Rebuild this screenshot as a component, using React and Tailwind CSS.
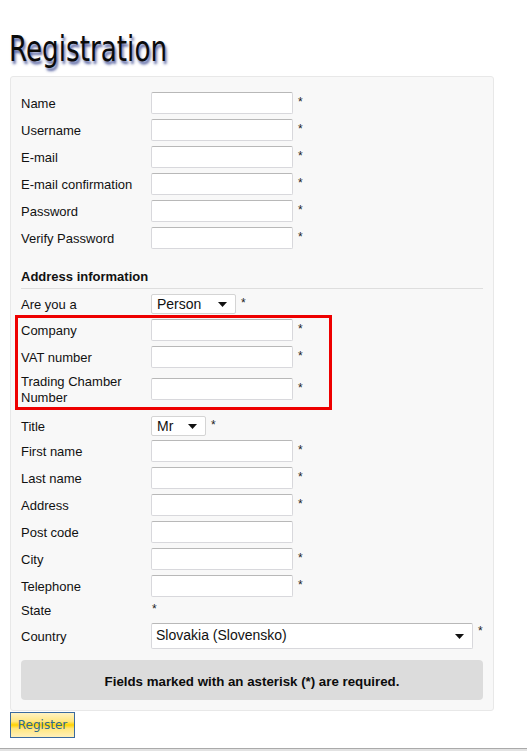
import React from "react";

// little black triangle used on the selects
const Caret = () => (
  <svg width="9" height="5" viewBox="0 0 9 5" className="shrink-0">
    <path d="M0 0h9L4.5 5z" fill="#111" />
  </svg>
);

const Star = ({ className = "" }) => (
  <span className={"text-[12px] leading-none text-[#222] " + className}>*</span>
);

const TextField = () => (
  <input
    type="text"
    className="h-[22px] w-[142px] rounded-[2px] border border-[#d8d8dc] border-t-[#b8b8b8] bg-white px-1 outline-none"
  />
);

const Label = ({ children, className = "" }) => (
  <label className={"w-[130px] shrink-0 pt-[2px] " + className}>{children}</label>
);

const Row = ({ label, required = true }) => (
  <div className="flex items-center">
    <Label>{label}</Label>
    <TextField />
    {required && <Star className="ml-[5px] -mt-[3px]" />}
  </div>
);

const Dropdown = ({ value, width }) => (
  <div
    className={
      "flex h-[20px] items-center justify-between rounded-[2px] border border-[#d4d4d4] bg-white pl-[5px] pr-[8px] " +
      width
    }
  >
    <span className="text-[14px] leading-[18px] text-[#111]">{value}</span>
    <Caret />
  </div>
);

export default function App() {
  const account = ["Name", "Username", "E-mail", "E-mail confirmation", "Password", "Verify Password"];
  const address = [
    ["Last name", true],
    ["Address", true],
    ["Post code", false],
    ["City", true],
    ["Telephone", true],
  ];

  return (
    <div className="min-h-[751px] bg-white font-['Liberation_Sans',Arial,sans-serif] text-[13px] text-[#111]">
      <div className="px-[10px]">
        <h1 className="pt-[29px] pb-[7px] font-['DejaVu_Sans_Condensed',sans-serif] text-[36px] leading-[40px] text-[#0b0b0b]">
          <span className="-ml-px inline-block origin-left scale-x-[0.81] [text-shadow:2px_3px_3px_rgba(30,45,130,0.75)]">
            Registration
          </span>
        </h1>

        <div className="w-[484px] rounded-[3px] border border-[#e8e8e8] bg-[#f8f8f8] px-[10px] pt-[15px] pb-[10px]">
          <div className="flex flex-col gap-[5px]">
            {account.map((l) => (
              <Row key={l} label={l} />
            ))}
          </div>

          {/* address section */}
          <div className="mt-[17px] border-b border-[#dedede] pt-[2px] pb-[3px] text-[13px] font-bold leading-[17px]">
            Address information
          </div>

          <div className="mt-[5px] flex h-[20px] items-center">
            <Label>Are you a</Label>
            <Dropdown value="Person" width="w-[85px]" />
            <Star className="ml-[5px] -mt-[3px]" />
          </div>

          {/* company fields, highlighted */}
          <div className="-ml-[6px] mt-[1px] flex w-[317px] flex-col gap-[5px] border-[3px] border-[#ee0000] pl-[3px] pt-[1px] pb-[2px]">
            <Row label="Company" />
            <Row label="VAT number" />
            <div className="flex h-[32px] items-center">
              <Label className="leading-[16px]">
                Trading Chamber
                <br />
                Number
              </Label>
              <TextField />
              <Star className="ml-[5px] -mt-[3px]" />
            </div>
          </div>

          <div className="mt-[6px] flex h-[20px] items-center">
            <Label>Title</Label>
            <Dropdown value="Mr" width="w-[55px]" />
            <Star className="ml-[5px] -mt-[3px]" />
          </div>

          <div className="mt-[4px] flex flex-col gap-[5px]">
            <Row label="First name" />
            {address.map(([l, req]) => (
              <Row key={l} label={l} required={req} />
            ))}
          </div>

          <div className="mt-[5px] flex h-[16px] items-center">
            <Label>State</Label>
            <Star className="ml-[1px] -mt-[3px]" />
          </div>

          <div className="mt-[5px] flex items-center">
            <Label>Country</Label>
            <div className="flex h-[26px] w-[322px] items-start justify-between rounded-[2px] border border-[#d8d8dc] border-t-[#b8b8b8] bg-white pl-[4px] pr-[8px] pt-[2px]">
              <span className="text-[14px] leading-[18px] text-[#111]">Slovakia (Slovensko)</span>
              <span className="mt-[8px]">
                <Caret />
              </span>
            </div>
            <Star className="ml-[5px] -mt-[10px]" />
          </div>

          <div className="mt-[11px] flex h-[40px] items-center justify-center rounded-[4px] bg-[#dcdcdc] pt-[4px] text-[13.3px] font-bold text-[#0c0c0c]">
            Fields marked with an asterisk (*) are required.
          </div>
        </div>

        <button className="mt-[1px] h-[26px] w-[65px] border border-[#3a6a9e] bg-[linear-gradient(#fff3c4_0%,#ffe680_35%,#ffd200_50%,#ffe680_65%,#fff0b8_100%)] font-['DejaVu_Sans',Verdana,sans-serif] text-[12px] text-[#2f6a8c]">
          Register
        </button>
      </div>

      <div className="mt-[10px] h-[4px] border-t border-[#aaaaaa] bg-[#e2e2e2]" />
    </div>
  );
}
